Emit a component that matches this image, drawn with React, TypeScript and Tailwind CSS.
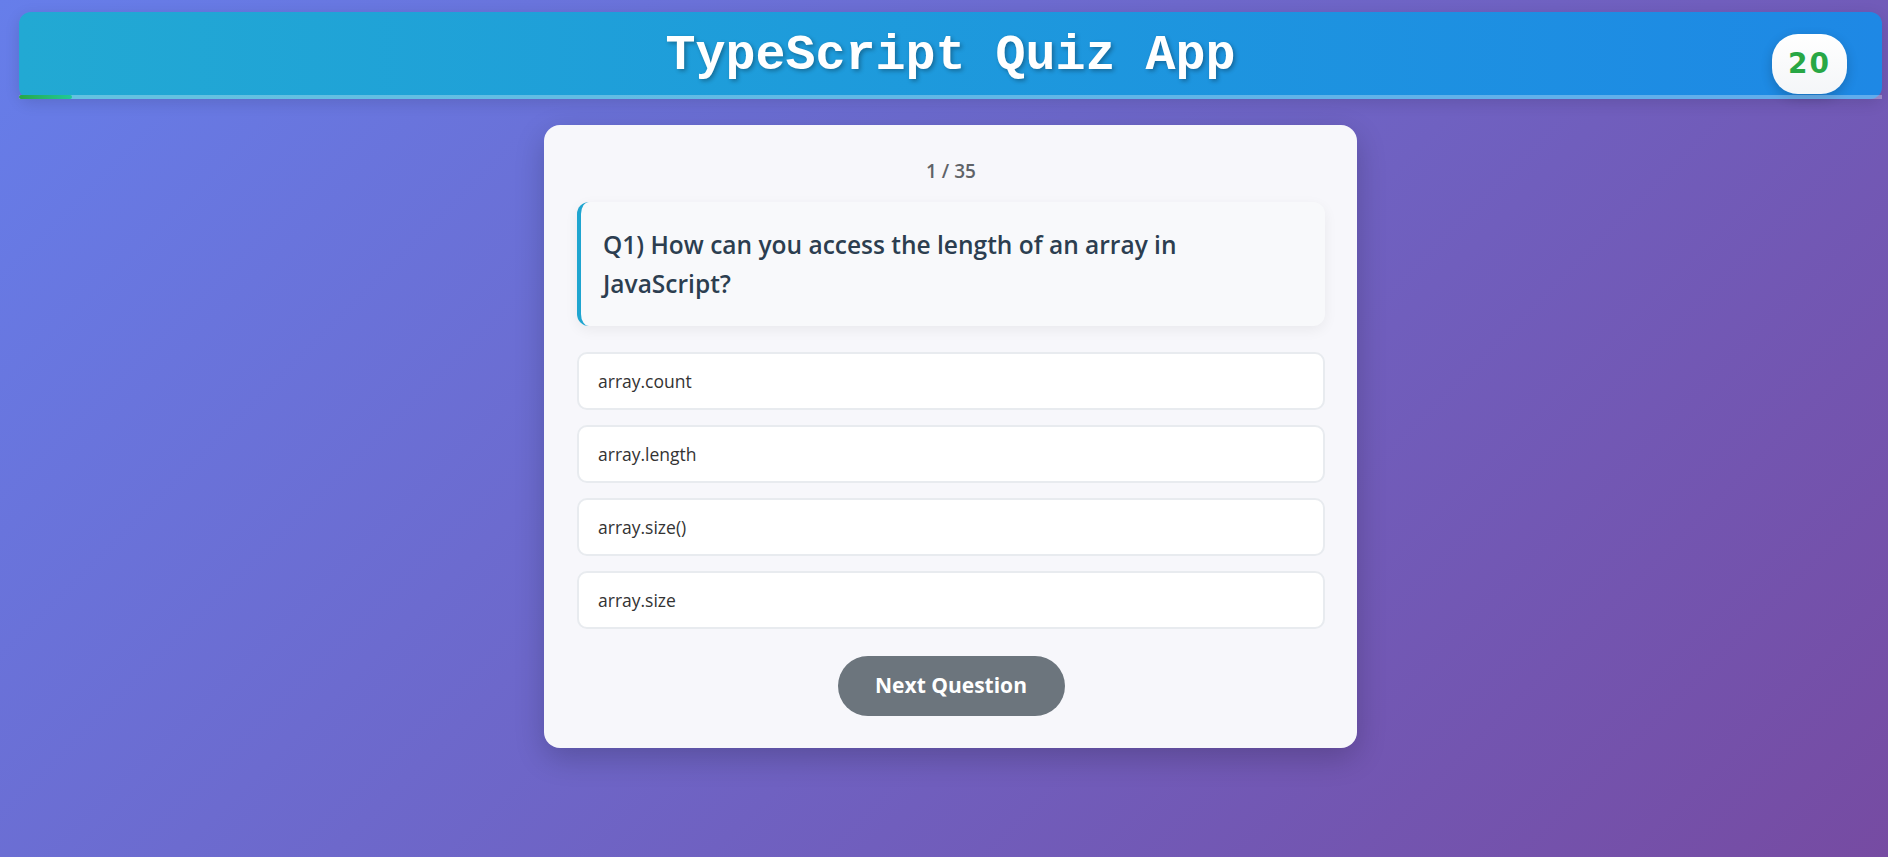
import React from "react";

const options = ["array.count", "array.length", "array.size()", "array.size"];

export default function App() {
  return (
    <div className="min-h-[857px] w-full bg-[linear-gradient(135deg,#667eea_0%,#764ba2_100%)] pt-[12px] font-['Open_Sans',sans-serif]">
      <div className="ml-[19px] w-[1863px]">
        <header className="relative flex h-[87px] items-center justify-center rounded-[12px] bg-gradient-to-r from-[#22a9d3] to-[#1e88e5] shadow-[0_4px_15px_rgba(0,0,0,0.12)]">
          <h1 className="font-['Liberation_Mono',monospace] text-[50px] font-bold leading-none text-white [text-shadow:2px_2px_4px_rgba(0,0,0,0.3)]">
            TypeScript Quiz App
          </h1>
          <div className="absolute right-[35px] top-[22px] flex h-[60px] w-[75px] items-center justify-center rounded-[26px] bg-gradient-to-b from-white to-[#f4f6f8] shadow-[0_4px_12px_rgba(0,0,0,0.2)]">
            <span className="font-['DejaVu_Sans',sans-serif] text-[28px] font-bold tracking-[2px] text-[#28a745]">20</span>
          </div>
          <div className="absolute bottom-0 left-0 h-[4px] w-full bg-white/30">
            <div className="h-full w-[53px] rounded-full bg-gradient-to-r from-[#28a745] to-[#20c997]" />
          </div>
        </header>

        <main className="mx-auto mt-[26px] w-[813px] rounded-[16px] bg-[#f7f7fb] pb-[32px] pl-[33px] pr-[32px] pt-[32px] shadow-[0_10px_30px_rgba(0,0,0,0.2)]">
          <div className="mb-[17px] h-[28px] text-center text-[19px] font-semibold leading-[28px] text-[#5f6368]">1 / 35</div>
          <div className="mb-[26px] rounded-[12px] border-l-[4px] border-[#1fa5d0] bg-[#f8f9fb] py-[23px] pl-[22px] pr-[24px] shadow-[0_4px_14px_rgba(0,0,0,0.06)]">
            <p className="text-[24.5px] font-semibold leading-[39px] text-[#2c3e50]">
              Q1) How can you access the length of an array in JavaScript?
            </p>
          </div>
          <div className="flex flex-col gap-[15px]">
            {options.map((o) => (
              <div
                key={o}
                className="flex h-[58px] items-center rounded-[10px] border-2 border-[#e8ebef] bg-white px-[19px] text-[17.5px] text-[#333]"
              >
                {o}
              </div>
            ))}
          </div>
          <div className="mt-[27px] flex justify-center">
            <button className="h-[60px] w-[227px] rounded-full bg-[#6c757d] text-[21px] font-bold text-white">
              Next Question
            </button>
          </div>
        </main>
      </div>
    </div>
  );
}
